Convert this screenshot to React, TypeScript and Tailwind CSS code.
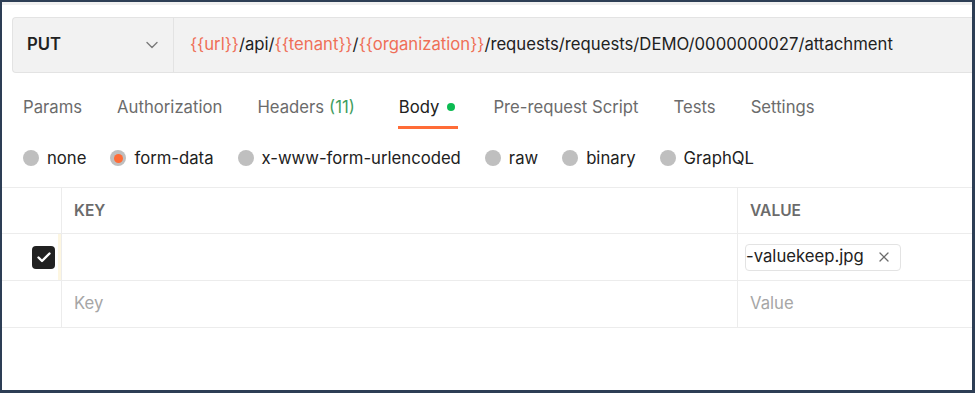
import React from 'react';

const tabs = [
  { label: 'Params' },
  { label: 'Authorization' },
  { label: 'Headers', count: '(11)' },
  { label: 'Body', active: true },
  { label: 'Pre-request Script' },
  { label: 'Tests' },
  { label: 'Settings' },
];

const bodyTypes = [
  { label: 'none' },
  { label: 'form-data', selected: true },
  { label: 'x-www-form-urlencoded' },
  { label: 'raw' },
  { label: 'binary' },
  { label: 'GraphQL' },
];

const Var: React.FC<{ name: string }> = ({ name }) => (
  <span className="text-[#ef6f58]">{`{{${name}}}`}</span>
);

const App: React.FC = () => {
  return (
    <div
      className="w-[975px] h-[393px] overflow-hidden bg-white border-[#2d3e55] border-t-2 border-l-2 border-r-[3px] border-b-[3px] text-[#212121]"
      style={{ fontFamily: 'Inter, "Noto Sans", sans-serif' }}
    >
      <div className="h-[3px] bg-[#f0f0f0]" />

      {/* URL bar */}
      <div className="ml-[10px] mt-[12px] flex h-[56px] rounded-l-[4px] border border-r-0 border-[#e3e3e3] bg-[#f2f2f2]">
        <div className="flex w-[161px] shrink-0 items-center justify-between border-r border-[#e3e3e3] pl-[14px] pr-[15px]">
          <span className="text-[16.7px] font-semibold">PUT</span>
          <svg width="12" height="8" viewBox="0 0 12 8" fill="none">
            <path d="M1 1.5 6 6.5 11 1.5" stroke="#7a7a7a" strokeWidth="1.4" strokeLinecap="round" strokeLinejoin="round" />
          </svg>
        </div>
        <div className="flex items-center pl-[16px] text-[16.7px] whitespace-nowrap text-[#212121]">
          <Var name="url" />/api/<Var name="tenant" />/<Var name="organization" />/requests/requests/DEMO/0000000027/attachment
        </div>
      </div>

      {/* Tabs */}
      <div className="mt-[23px] flex items-end gap-[35px] pl-[21px] text-[16.7px] leading-[22px]">
        {tabs.map((t) => (
          <div
            key={t.label}
            className={
              t.active
                ? 'ml-[8px] flex items-center gap-[8px] border-b-[3px] border-[#ff6c37] pb-[8px] pl-px pr-[3px] text-[#212121]'
                : 'flex items-center gap-[5px] pb-[11px] text-[#6b6b6b]'
            }
          >
            <span>{t.label}</span>
            {t.count && <span className="text-[#3f9d5e]">{t.count}</span>}
            {t.active && <span className="h-[8px] w-[8px] rounded-full bg-[#0cbb52]" />}
          </div>
        ))}
      </div>

      {/* Body types */}
      <div className="mt-[18px] flex h-[22px] items-center gap-[24px] pl-[21px] text-[16.7px] leading-[22px]">
        {bodyTypes.map((b) => (
          <div key={b.label} className="flex items-center gap-[8px]">
            <span className="flex h-[16px] w-[16px] items-center justify-center rounded-full bg-[#bfbfbf]">
              {b.selected && <span className="h-[9px] w-[9px] rounded-full bg-[#ff6c37]" />}
            </span>
            <span>{b.label}</span>
          </div>
        ))}
      </div>

      {/* Form data table */}
      <div className="mt-[18px] border-t border-[#ececec] text-[16.7px]">
        <div className="flex h-[46px] border-b border-[#ececec]">
          <div className="w-[60px] shrink-0 border-r border-[#ececec]" />
          <div className="flex w-[676px] shrink-0 items-center border-r border-[#ececec] pl-[12px] text-[15.5px] font-semibold text-[#6b6b6b]">
            KEY
          </div>
          <div className="flex items-center pl-[12px] text-[15.5px] font-semibold text-[#6b6b6b]">VALUE</div>
        </div>
        <div className="flex h-[47px] border-b border-[#ececec]">
          <div className="flex w-[60px] shrink-0 items-center justify-end border-r border-[#ececec]">
            <span className="flex h-[23px] w-[23px] items-center justify-center rounded-[4px] bg-[#212121]">
              <svg width="14" height="11" viewBox="0 0 14 11" fill="none">
                <path d="M1.5 5.5 5 9 12.5 1.5" stroke="#fff" strokeWidth="2.4" strokeLinecap="round" strokeLinejoin="round" />
              </svg>
            </span>
            <span className="ml-[3px] h-full w-[3px] bg-[#fdf6e1]" />
          </div>
          <div className="w-[676px] shrink-0 border-r border-[#ececec]" />
          <div className="flex items-center pl-[7px]">
            <div className="flex h-[27px] w-[156px] items-center justify-between overflow-hidden rounded-[4px] border border-[#e3e3e3] pr-[11px] text-[#212121]">
              <span className="whitespace-nowrap">-valuekeep.jpg</span>
              <svg className="shrink-0" width="10" height="10" viewBox="0 0 10 10" fill="none">
                <path d="M1 1 9 9M9 1 1 9" stroke="#6b6b6b" strokeWidth="1.3" strokeLinecap="round" />
              </svg>
            </div>
          </div>
        </div>
        <div className="flex h-[47px] border-b border-[#ececec]">
          <div className="w-[60px] shrink-0 border-r border-[#ececec]" />
          <div className="flex w-[676px] shrink-0 items-center border-r border-[#ececec] pl-[12px] text-[#a6a6a6]">
            Key
          </div>
          <div className="flex items-center pl-[12px] text-[#a6a6a6]">Value</div>
        </div>
      </div>
    </div>
  );
};

export default App;
